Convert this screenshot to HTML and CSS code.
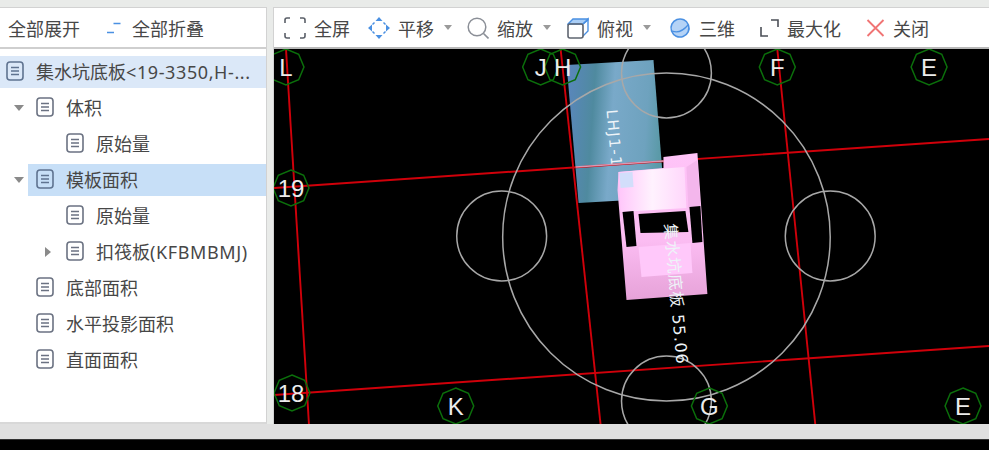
FILE: index.html
```html
<!DOCTYPE html>
<html lang="zh-CN">
<head>
  <meta charset="UTF-8" />
  <title>集水坑底板</title>
  <link rel="stylesheet" href="styles.css">
</head>
<body>
  <svg class="defs" width="0" height="0">
    <defs>
      <symbol id="doc" viewBox="0 0 18 20">
        <rect x="1" y="1" width="16" height="18" rx="3" fill="none" stroke="currentColor" stroke-width="1.6"/>
        <path d="M5 6.5h8M5 10h8M5 13.5h8" fill="none" stroke="currentColor" stroke-width="1.5"/>
      </symbol>
      <polygon id="axis" points="0,-18 12.7,-12.7 18,0 12.7,12.7 0,18 -12.7,12.7 -18,0 -12.7,-12.7"/>
      <linearGradient id="slab" x1="0" y1="0" x2="1" y2="0.1">
        <stop offset="0" stop-color="#5b86bf"/>
        <stop offset="0.3" stop-color="#4f8a9f"/>
        <stop offset="0.5" stop-color="#79a9c9"/>
        <stop offset="0.85" stop-color="#6ea2be"/>
        <stop offset="1" stop-color="#5b9aa8"/>
      </linearGradient>
      <linearGradient id="pit" x1="0" y1="0" x2="0" y2="1">
        <stop offset="0" stop-color="#ffc4f8"/>
        <stop offset="0.6" stop-color="#fbbcf2"/>
        <stop offset="1" stop-color="#e6a2d8"/>
      </linearGradient>
      <linearGradient id="pit-top" x1="0" y1="0" x2="1" y2="0">
        <stop offset="0" stop-color="#ffc6fa"/>
        <stop offset="0.5" stop-color="#fff2fe"/>
        <stop offset="1" stop-color="#ffd6fb"/>
      </linearGradient>
    </defs>
  </svg>

  <div class="main">
    <aside class="side">
      <div class="bar side-bar">
        <span class="side-btn">全部展开</span>
        <svg class="collapse-icon" width="16" height="14" viewBox="0 0 16 14">
          <path d="M1 11.5h7M7.5 2.5h7" fill="none" stroke="#4a90e2" stroke-width="1.6"/>
        </svg>
        <span>全部折叠</span>
      </div>
      <ul class="tree">
        <li class="row">
          <div class="node node-root is-soft"><svg class="doc"><use href="#doc"/></svg><span>集水坑底板<span class="latin">&lt;19-3350,H-...</span></span></div>
        </li>
        <li class="row">
          <span class="slot"><i class="arrow-down"></i></span>
          <div class="node"><svg class="doc"><use href="#doc"/></svg>体积</div>
        </li>
        <li class="row">
          <span class="slot slot-deep"></span>
          <div class="node"><svg class="doc"><use href="#doc"/></svg>原始量</div>
        </li>
        <li class="row">
          <span class="slot"><i class="arrow-down"></i></span>
          <div class="node is-selected"><svg class="doc"><use href="#doc"/></svg>模板面积</div>
        </li>
        <li class="row">
          <span class="slot slot-deep"></span>
          <div class="node"><svg class="doc"><use href="#doc"/></svg>原始量</div>
        </li>
        <li class="row">
          <span class="slot slot-deep"><i class="arrow-right"></i></span>
          <div class="node"><svg class="doc"><use href="#doc"/></svg><span>扣筏板<span class="latin">(KFBMBMJ)</span></span></div>
        </li>
        <li class="row">
          <span class="slot"></span>
          <div class="node"><svg class="doc"><use href="#doc"/></svg>底部面积</div>
        </li>
        <li class="row">
          <span class="slot"></span>
          <div class="node"><svg class="doc"><use href="#doc"/></svg>水平投影面积</div>
        </li>
        <li class="row">
          <span class="slot"></span>
          <div class="node"><svg class="doc"><use href="#doc"/></svg>直面面积</div>
        </li>
      </ul>
    </aside>

    <section class="view">
      <div class="bar view-bar">
        <div class="tool tool-gap">
          <svg class="tool-icon" viewBox="0 0 22 22">
            <path d="M1 6V3a2 2 0 0 1 2-2h3M16 1h3a2 2 0 0 1 2 2v3M21 16v3a2 2 0 0 1-2 2h-3M6 21H3a2 2 0 0 1-2-2v-3" fill="none" stroke="#5a5f68" stroke-width="1.6"/>
          </svg>
          全屏
        </div>
        <div class="tool tool-tight">
          <svg class="tool-icon" viewBox="0 0 22 22">
            <path d="M11 0l3.5 4h-7zM11 22l3.5-4h-7zM0 11l4-3.5v7zM22 11l-4-3.5v7z" fill="#4a90e2"/>
            <path d="M15.5 5.5l2 2M6.5 5.5l-2 2M15.5 16.5l2-2M6.5 16.5l-2-2" fill="none" stroke="#4a90e2" stroke-width="1.5"/>
          </svg>
          平移<i class="caret"></i>
        </div>
        <div class="tool">
          <svg class="tool-icon" viewBox="0 0 22 22">
            <circle cx="10" cy="10" r="8.8" fill="none" stroke="#8b8f97" stroke-width="1.5"/>
            <path d="M16.5 16.5l5 5" fill="none" stroke="#8b8f97" stroke-width="1.6"/>
          </svg>
          缩放<i class="caret"></i>
        </div>
        <div class="tool">
          <svg class="tool-icon" viewBox="0 0 22 22">
            <path d="M1 7l5-5h15v1l-5 4z" fill="#a9cdf5" stroke="#4a90e2" stroke-width="1.4"/>
            <path d="M16 7l5-5v12l-5 5" fill="none" stroke="#4a90e2" stroke-width="1.4"/>
            <rect x="1" y="7" width="15" height="14" rx="2" fill="none" stroke="#5f6570" stroke-width="1.6"/>
          </svg>
          俯视<i class="caret"></i>
        </div>
        <div class="tool tool-wide">
          <svg class="tool-icon tool-icon-pad" viewBox="-2 0 24 22">
            <circle cx="11" cy="11" r="9" fill="#b5d3f6" stroke="#4a90e2" stroke-width="1.6" transform="rotate(-20 11 11)"/>
            <path d="M3 14c5 2 11 0 16-6" fill="none" stroke="#4a90e2" stroke-width="1.2"/>
          </svg>
          三维
        </div>
        <div class="tool tool-wide">
          <svg class="tool-icon tool-icon-small" viewBox="0 0 19 18">
            <path d="M1 8v9h7M11 1h7v7" fill="none" stroke="#4b4f57" stroke-width="1.6"/>
          </svg>
          最大化
        </div>
        <div class="tool">
          <svg class="tool-icon tool-icon-small" viewBox="0 0 19 18">
            <path d="M1.5 1l16 16M17.5 1l-16 16" fill="none" stroke="#f07474" stroke-width="1.8"/>
          </svg>
          关闭
        </div>
      </div>

      <svg class="canvas" viewBox="273 49 716 375" preserveAspectRatio="none">
        <polygon points="566,65 653,60 664,198 578,203" fill="url(#slab)"/>
        <text class="cad-note cad-code" transform="translate(606,110) rotate(85)">LHJ1-1</text>

        <g class="grid-line">
          <line x1="285" y1="49" x2="308" y2="424"/>
          <line x1="560" y1="49" x2="600" y2="424"/>
          <line x1="777" y1="49" x2="815" y2="424"/>
          <line x1="273" y1="188" x2="989" y2="139"/>
          <line x1="273" y1="395" x2="989" y2="346"/>
        </g>
        <line class="grid-fade" x1="575" y1="167" x2="663" y2="161"/>

        <g class="hole">
          <circle cx="666" cy="237" r="164"/>
          <circle cx="666" cy="73" r="45"/>
          <circle cx="501" cy="236" r="45"/>
          <circle cx="830" cy="236" r="45"/>
          <circle cx="666" cy="401" r="45"/>
        </g>

        <polygon points="663,157 697,153 707,294 626,300 617,190 618,172 663,168" fill="url(#pit)"/>
        <polygon points="618,172 684,167 686,208 620,212" fill="url(#pit-top)"/>
        <polygon points="619,173 632,172 633,187 620,188" fill="#d2defb"/>
        <polygon points="686,167 697,160 700,206 688,208" fill="#f4b6ec"/>
        <polygon points="622,212 633,211 636,246 626,247" fill="#000"/>
        <polygon points="638,214 685,211 688,232 640,233" fill="#000"/>
        <polygon points="689,207 700,206 702,242 692,243" fill="#000"/>
        <polygon points="638,247 690,243 692,273 641,277" fill="#ffc8fa"/>
        <text class="cad-note cad-name" transform="translate(664,224) rotate(85)">集水坑底板 55.06</text>

        <g class="axis">
          <use href="#axis" x="285" y="67"/>
          <use href="#axis" x="540" y="67"/>
          <use href="#axis" x="562" y="67"/>
          <use href="#axis" x="777" y="67"/>
          <use href="#axis" x="929" y="67"/>
          <use href="#axis" x="290" y="188"/>
          <use href="#axis" x="291" y="393"/>
          <use href="#axis" x="455" y="406"/>
          <use href="#axis" x="709" y="406"/>
          <use href="#axis" x="963" y="406"/>
        </g>
        <g class="axis-label">
          <text x="285" y="76">L</text>
          <text x="540" y="76">J</text>
          <text x="562" y="76">H</text>
          <text x="777" y="76">F</text>
          <text x="929" y="76">E</text>
          <text x="290" y="197">19</text>
          <text x="290" y="402">18</text>
          <text x="455" y="415">K</text>
          <text x="709" y="415">G</text>
          <text x="963" y="415">E</text>
        </g>
      </svg>
    </section>
  </div>

  <div class="status"></div>
  <div class="taskbar"></div>
</body>
</html>
```

FILE: styles.css
```css
* {
  box-sizing: border-box;
  margin: 0;
  padding: 0;
}

html,
body {
  height: 450px;
  overflow: hidden;
}

body {
  display: flex;
  flex-direction: column;
  background: #e9ebe9;
  color: #474747;
  font-family: "Noto Sans", "Noto Sans CJK SC", sans-serif;
  font-size: 18px;
}

.defs {
  position: absolute;
}

.main {
  display: flex;
  gap: 6px;
  height: 424px;
  padding-top: 7px;
}

.side {
  display: flex;
  flex-direction: column;
  width: 267px;
  background: #fff;
  border-top: 1px solid #d2d2d2;
  border-right: 1px solid #d2d2d2;
  border-bottom: 2px solid #d8d8d8;
}

.view {
  display: flex;
  flex-direction: column;
  flex: 1;
  border-top: 1px solid #d2d2d2;
  border-left: 1px solid #d2d2d2;
}

.bar {
  display: flex;
  align-items: center;
  flex: none;
  height: 41px;
  background: #fff;
  border-bottom: 2px solid #b8b8b8;
  white-space: nowrap;
}

.side-bar {
  padding-left: 8px;
  border-bottom-color: #cfcfcf;
}

.side-btn {
  margin-right: 26px;
}

.collapse-icon {
  margin-right: 10px;
}

.tree {
  list-style: none;
  padding-top: 7px;
}

.row {
  display: flex;
  height: 32px;
  margin-bottom: 4px;
}

.slot {
  display: flex;
  align-items: center;
  flex: none;
  width: 28px;
  padding-left: 14px;
}

.slot-deep {
  width: 58px;
  padding-left: 45px;
}

.node {
  display: flex;
  align-items: center;
  flex: 1;
  gap: 12px;
  padding-left: 8px;
  padding-bottom: 2px;
  white-space: nowrap;
}

.node-root {
  padding-left: 6px;
}

.latin {
  letter-spacing: 0.6px;
}

.is-soft {
  background: #dbe8f8;
}

.is-selected {
  background: #c7dff7;
}

.doc {
  flex: none;
  width: 18px;
  height: 20px;
  color: #6b7282;
}

.is-selected .doc,
.is-soft .doc {
  color: #5f7390;
}

.arrow-down {
  width: 0;
  height: 0;
  border-left: 5px solid transparent;
  border-right: 5px solid transparent;
  border-top: 6px solid #8a8a8a;
}

.arrow-right {
  width: 0;
  height: 0;
  border-top: 5px solid transparent;
  border-bottom: 5px solid transparent;
  border-left: 6px solid #8a8a8a;
}

.view-bar {
  padding-left: 10px;
}

.tool {
  display: flex;
  align-items: center;
  margin-right: 16px;
}

.tool-gap {
  margin-right: 18px;
}

.tool-tight {
  margin-right: 15px;
}

.tool-wide {
  margin-right: 25px;
}

.tool-icon {
  flex: none;
  width: 22px;
  height: 22px;
  margin-right: 8px;
}

.tool-icon-pad {
  width: 24px;
}

.tool-icon-small {
  width: 19px;
  height: 18px;
}

.caret {
  width: 0;
  height: 0;
  margin-left: 10px;
  border-left: 4px solid transparent;
  border-right: 4px solid transparent;
  border-top: 5px solid #9a9a9a;
}

.canvas {
  display: block;
  width: 100%;
  height: 375px;
  background: #000;
}

.grid-line line {
  stroke: #d0000a;
  stroke-width: 1.9;
}

.grid-fade {
  stroke: #d79ab4;
  stroke-width: 1.6;
}

.hole circle {
  fill: none;
  stroke: #a8a8a8;
  stroke-width: 1.5;
}

.axis use {
  fill: none;
  stroke: #0b6f0b;
  stroke-width: 1.5;
}

.axis-label text {
  fill: #ececec;
  font-family: "Liberation Sans", sans-serif;
  font-size: 24px;
  text-anchor: middle;
}

.cad-note {
  fill: #eef4f8;
  font-family: "DejaVu Sans", "Noto Sans CJK SC", sans-serif;
}

.cad-code {
  font-size: 15px;
  letter-spacing: 1.6px;
}

.cad-name {
  font-size: 16px;
  letter-spacing: 1px;
}

.status {
  flex: none;
  height: 15px;
  background: #e0e0e0;
}

.taskbar {
  flex: 1;
  background: #000;
  border-top: 1px solid #333;
}
```
